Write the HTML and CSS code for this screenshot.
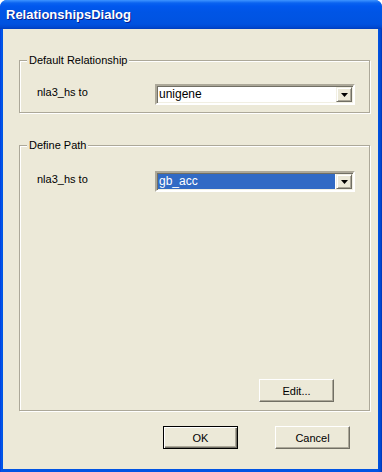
FILE: index.html
```html
<!DOCTYPE html>
<html lang="en">
<head>
    <meta charset="UTF-8">
    <meta name="viewport" content="width=device-width, initial-scale=1.0">
    <title>RelationshipsDialog</title>
    <link rel="stylesheet" href="styles.css">
</head>
<body>
    <div class="window">
        <div class="titlebar">
            <span class="title">RelationshipsDialog</span>
        </div>
        <div class="client">
            <fieldset class="group group-default">
                <legend>Default Relationship</legend>
                <div class="group-body">
                    <div class="row">
                        <label class="row-label">nla3_hs to</label>
                        <div class="combo">
                            <span class="combo-value">unigene</span>
                            <span class="combo-btn">
                                <svg width="7" height="4" viewBox="0 0 7 4"><path d="M0 0h7L3.5 4z" fill="#000"/></svg>
                            </span>
                        </div>
                    </div>
                </div>
            </fieldset>

            <fieldset class="group group-path">
                <legend>Define Path</legend>
                <div class="group-body">
                    <div class="row">
                        <label class="row-label">nla3_hs to</label>
                        <div class="combo focused">
                            <span class="combo-value">gb_acc</span>
                            <span class="combo-btn">
                                <svg width="7" height="4" viewBox="0 0 7 4"><path d="M0 0h7L3.5 4z" fill="#000"/></svg>
                            </span>
                        </div>
                    </div>
                    <div class="group-actions">
                        <button class="btn">Edit...</button>
                    </div>
                </div>
            </fieldset>

            <div class="dialog-actions">
                <button class="btn btn-default">OK</button>
                <button class="btn">Cancel</button>
            </div>
        </div>
    </div>
</body>
</html>
```

FILE: styles.css
```css
body {
    margin: 0;
    font-family: "Liberation Sans", Arial, sans-serif;
    font-size: 11px;
    color: #000;
    background-color: #fff;
}

.window {
    width: 382px;
    height: 472px;
    display: flex;
    flex-direction: column;
    background: linear-gradient(to right, #0831d9 0, #0056ea 1px, #0054e3 3px, #0054e3 378px, #0050dc 379px, #0044cc 381px, #002fb0 382px);
    border-radius: 7px 7px 0 0;
    overflow: hidden;
}

.titlebar {
    height: 29px;
    flex-shrink: 0;
    display: flex;
    align-items: center;
    padding: 0 0 1px 6px;
    box-sizing: border-box;
    background: linear-gradient(#3d95ff 0, #2d84fb 1px, #0a63f0 3px, #0058ee 6px, #0055e5 12px, #0054e3 18px, #0052e0 24px, #0049d2 27px, #003dbd 29px);
}

.title {
    color: #fff;
    font-family: "Liberation Sans", Arial, sans-serif;
    font-weight: bold;
    font-size: 13px;
    text-shadow: 1px 1px 0 #0a1e8c;
}

.client {
    flex: 1;
    margin: 0 4px 3px 3px;
    padding: 25px 7px 0 16px;
    background-color: #ece9d8;
    display: flex;
    flex-direction: column;
}

.group {
    margin: 0 1px 0 0;
    padding: 0;
    min-inline-size: 0;
    border: 1px solid #aca899;
    box-shadow: 1px 1px 0 #fff, inset 1px 1px 0 #fff;
}

.group legend {
    margin-left: 7px;
    padding: 0 2px;
    line-height: 13px;
    background-color: #ece9d8;
}

.group-default .group-body {
    padding: 17px 14px 7px 17px;
}

.group-path {
    margin-top: 26px;
}

.group-path .group-body {
    height: 258px;
    box-sizing: border-box;
    padding: 19px 14px 8px 17px;
    display: flex;
    flex-direction: column;
}

.row {
    display: flex;
    align-items: flex-start;
}

.row-label {
    width: 118px;
    flex-shrink: 0;
    line-height: 13px;
    padding-top: 2px;
}

.combo {
    width: 200px;
    height: 21px;
    box-sizing: border-box;
    display: flex;
    align-items: stretch;
    background-color: #fff;
    border-style: solid;
    border-width: 2px;
    border-color: #aca899 #fff #fff #aca899;
    box-shadow: inset 1px 1px 0 #716f64, inset -1px -1px 0 #f1efe2;
    padding: 0;
}

.combo-value {
    flex: 1;
    font-size: 12px;
    line-height: 15px;
    padding: 0 2px 0 1px;
    margin: 1px 0 1px 1px;
}

.focused .combo-value {
    background-color: #316ac5;
    color: #fff;
}

.combo-btn {
    width: 16px;
    margin: 1px 1px 1px 1px;
    box-sizing: border-box;
    display: flex;
    align-items: center;
    justify-content: center;
    background-color: #ece9d8;
    border-style: solid;
    border-width: 1px;
    border-color: #f1efe2 #716f64 #716f64 #f1efe2;
    box-shadow: inset 1px 1px 0 #fff, inset -1px -1px 0 #aca899;
}

.group-actions {
    margin-top: auto;
    display: flex;
    justify-content: flex-end;
    padding-right: 21px;
}

.btn {
    width: 75px;
    height: 23px;
    padding: 0;
    font-family: "Liberation Sans", Arial, sans-serif;
    font-size: 11px;
    color: #000;
    background-color: #ece9d8;
    border-style: solid;
    border-width: 1px;
    border-color: #fff #716f64 #716f64 #fff;
    box-shadow: inset -1px -1px 0 #aca899;
    cursor: pointer;
}

.btn-default {
    border-color: #000;
    box-shadow: inset 1px 1px 0 #fff, inset -1px -1px 0 #716f64, inset -2px -2px 0 #aca899;
}

.dialog-actions {
    display: flex;
    gap: 37px;
    justify-content: flex-end;
    padding-right: 21px;
    margin-top: 15px;
}
```
